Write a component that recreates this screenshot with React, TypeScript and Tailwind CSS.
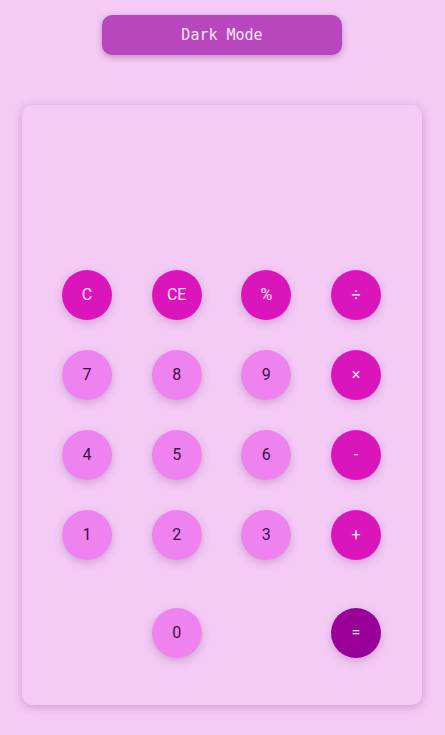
import React from "react"

// calculator keypad, rows top to bottom
const rows: { label: string; kind: "op" | "num" | "eq" | "none" }[][] = [
  [
    { label: "C", kind: "op" },
    { label: "CE", kind: "op" },
    { label: "%", kind: "op" },
    { label: "÷", kind: "op" },
  ],
  [
    { label: "7", kind: "num" },
    { label: "8", kind: "num" },
    { label: "9", kind: "num" },
    { label: "×", kind: "op" },
  ],
  [
    { label: "4", kind: "num" },
    { label: "5", kind: "num" },
    { label: "6", kind: "num" },
    { label: "-", kind: "op" },
  ],
  [
    { label: "1", kind: "num" },
    { label: "2", kind: "num" },
    { label: "3", kind: "num" },
    { label: "+", kind: "op" },
  ],
]

const styles = {
  op: "bg-[#dc14bc] text-[#fbe6f8]",
  num: "bg-[#ee82ee] text-[#3d1050]",
  eq: "bg-[#990099] text-[#fbe6f8]",
  none: "invisible",
}

function Key({ label, kind }: { label: string; kind: keyof typeof styles }) {
  return (
    <button
      className={`flex h-[50px] w-[50px] items-center justify-center rounded-full text-[16px] shadow-[0_3px_8px_rgba(120,40,120,0.25)] ${styles[kind]}`}
      style={{ fontFamily: "Roboto, 'Liberation Sans', sans-serif" }}
    >
      {label}
    </button>
  )
}

export default function App() {
  return (
    <div className="min-h-[735px] w-full bg-[#f3cbf5] pt-[15px]">
      <div className="flex w-[444px] flex-col items-center">
        <button
          className="h-[40px] w-[240px] rounded-[10px] bg-[#b847bd] text-[15px] text-[#fbe6f8] shadow-[0_2px_6px_rgba(90,20,90,0.35)]"
          style={{ fontFamily: "'DejaVu Sans Mono', monospace" }}
        >
          Dark Mode
        </button>

        <div className="mt-[50px] flex h-[600px] w-[400px] flex-col rounded-[10px] bg-[#f3cbf5] pl-10 pr-[41px] shadow-[0_2px_10px_rgba(120,40,120,0.3)]">
          <div className="h-[165px]" />
          <div className="flex flex-col gap-[30px]">
            {rows.map((row, i) => (
              <div key={i} className="flex justify-between">
                {row.map((k) => (
                  <Key key={k.label} label={k.label} kind={k.kind} />
                ))}
              </div>
            ))}
          </div>
          <div className="mt-[48px] flex justify-between">
            <Key label="" kind="none" />
            <Key label="0" kind="num" />
            <Key label="" kind="none" />
            <Key label="=" kind="eq" />
          </div>
        </div>
      </div>
    </div>
  )
}
